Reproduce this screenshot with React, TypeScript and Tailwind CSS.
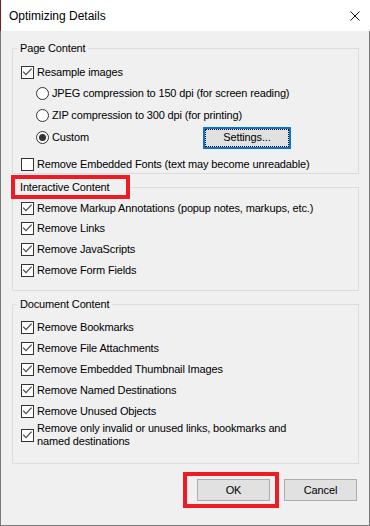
import React from "react";

const font = "font-['Segoe_UI','Liberation_Sans',Arial,sans-serif]";

function Check({ checked = true }: { checked?: boolean }) {
  return (
    <span className="flex h-[13px] w-[13px] shrink-0 items-center justify-center border border-[#333333] bg-white">
      {checked && (
        <svg width="11" height="11" viewBox="0 0 11 11">
          <polyline points="1.2,4.6 4,7.6 9.6,1.6" fill="none" stroke="#4a4a4a" strokeWidth="1.3" />
        </svg>
      )}
    </span>
  );
}

function Radio({ selected = false }: { selected?: boolean }) {
  return (
    <span className="flex h-[13px] w-[13px] shrink-0 items-center justify-center rounded-full border border-[#333333] bg-white">
      {selected && <span className="h-[7px] w-[7px] rounded-full bg-[#333333]" />}
    </span>
  );
}

function CheckRow({ label, checked = true, h = "h-[21px]" }: { label: string; checked?: boolean; h?: string }) {
  return (
    <div className={`flex items-center gap-[3px] ${h}`}>
      <Check checked={checked} />
      <span>{label}</span>
    </div>
  );
}

const interactive = [
  "Remove Markup Annotations (popup notes, markups, etc.)",
  "Remove Links",
  "Remove JavaScripts",
  "Remove Form Fields",
];

const documentItems = [
  "Remove Bookmarks",
  "Remove File Attachments",
  "Remove Embedded Thumbnail Images",
  "Remove Named Destinations",
  "Remove Unused Objects",
];

export default function App() {
  return (
    <div className={`flex h-[526px] w-[370px] flex-col bg-[#f0f0f0] text-[11px] leading-[13px] tracking-[-0.15px] text-black ${font}`}>
      {/* title bar */}
      <div className="flex h-[31px] shrink-0 items-center justify-between border-l border-[#7b1c1c] bg-white pl-[8px] pr-[10px]">
        <span className="text-[12px] leading-[16px] tracking-normal">Optimizing Details</span>
        <svg width="10" height="10" viewBox="0 0 10 10">
          <path d="M0.5 0.5 L9.5 9.5 M9.5 0.5 L0.5 9.5" stroke="#111" strokeWidth="1" />
        </svg>
      </div>

      <div className="flex flex-1 flex-col border-x border-b border-x-[#7a7a7a] border-b-[#7a7a7a] pl-[11px]">
        {/* Page Content */}
        <fieldset className="mt-[11px] w-[347px] border border-[#dcdcdc]">
          <legend className="ml-[4px] px-[3px]">Page Content</legend>
          <div className="flex flex-col pl-[8px] pt-[6px]">
            <CheckRow label="Resample images" h="h-[22px]" />
            <div className="ml-[15px] flex h-[21px] items-center gap-[3px]">
              <Radio />
              <span>JPEG compression to 150 dpi (for screen reading)</span>
            </div>
            <div className="ml-[15px] flex h-[22px] items-center gap-[3px]">
              <Radio />
              <span>ZIP compression to 300 dpi (for printing)</span>
            </div>
            <div className="ml-[15px] flex h-[23px] items-center">
              <div className="flex w-[167px] items-center gap-[3px]">
                <Radio selected />
                <span>Custom</span>
              </div>
              <button className="h-[22px] w-[88px] border-2 border-[#0078d7] bg-[#e1e1e1]">
                <span className="flex h-full w-full items-center justify-center border border-dotted border-black">
                  Settings...
                </span>
              </button>
            </div>
            <div className="mt-[6px]">
              <CheckRow label="Remove Embedded Fonts (text may become unreadable)" checked={false} h="h-[18px]" />
            </div>
          </div>
        </fieldset>

        {/* Interactive Content */}
        <fieldset className="mt-[1px] w-[347px] border border-[#dcdcdc]">
          <legend className="ml-[-2px] flex h-[24px] w-[119px] items-center border-4 border-[#ed1c24] pl-[5px]">
            Interactive Content
          </legend>
          <div className="flex flex-col pb-[9px] pl-[8px]">
            {interactive.map((t, i) => (
              <CheckRow key={t} label={t} h={i === 0 ? "h-[19px]" : "h-[21px]"} />
            ))}
          </div>
        </fieldset>

        {/* Document Content */}
        <fieldset className="mt-[7px] w-[347px] border border-[#dcdcdc]">
          <legend className="ml-[4px] px-[3px]">Document Content</legend>
          <div className="flex flex-col pb-[15px] pl-[8px] pt-[6px]">
            {documentItems.map((t) => (
              <CheckRow key={t} label={t} />
            ))}
            <div className="flex items-center gap-[3px]">
              <Check />
              <span className="w-[260px]">
                Remove only invalid or unused links, bookmarks and
                <br />
                named destinations
              </span>
            </div>
          </div>
        </fieldset>

        {/* buttons */}
        <div className="mt-[8px] flex items-center justify-end gap-[5px] pr-[12px]">
          <div className="border-4 border-[#ed1c24] pb-[3px] pl-[10px] pr-[5px] pt-[3px]">
            <button className="h-[22px] w-[73px] border border-[#adadad] bg-[#e1e1e1]">OK</button>
          </div>
          <button className="h-[22px] w-[73px] border border-[#adadad] bg-[#e1e1e1]">Cancel</button>
        </div>
      </div>
    </div>
  );
}
